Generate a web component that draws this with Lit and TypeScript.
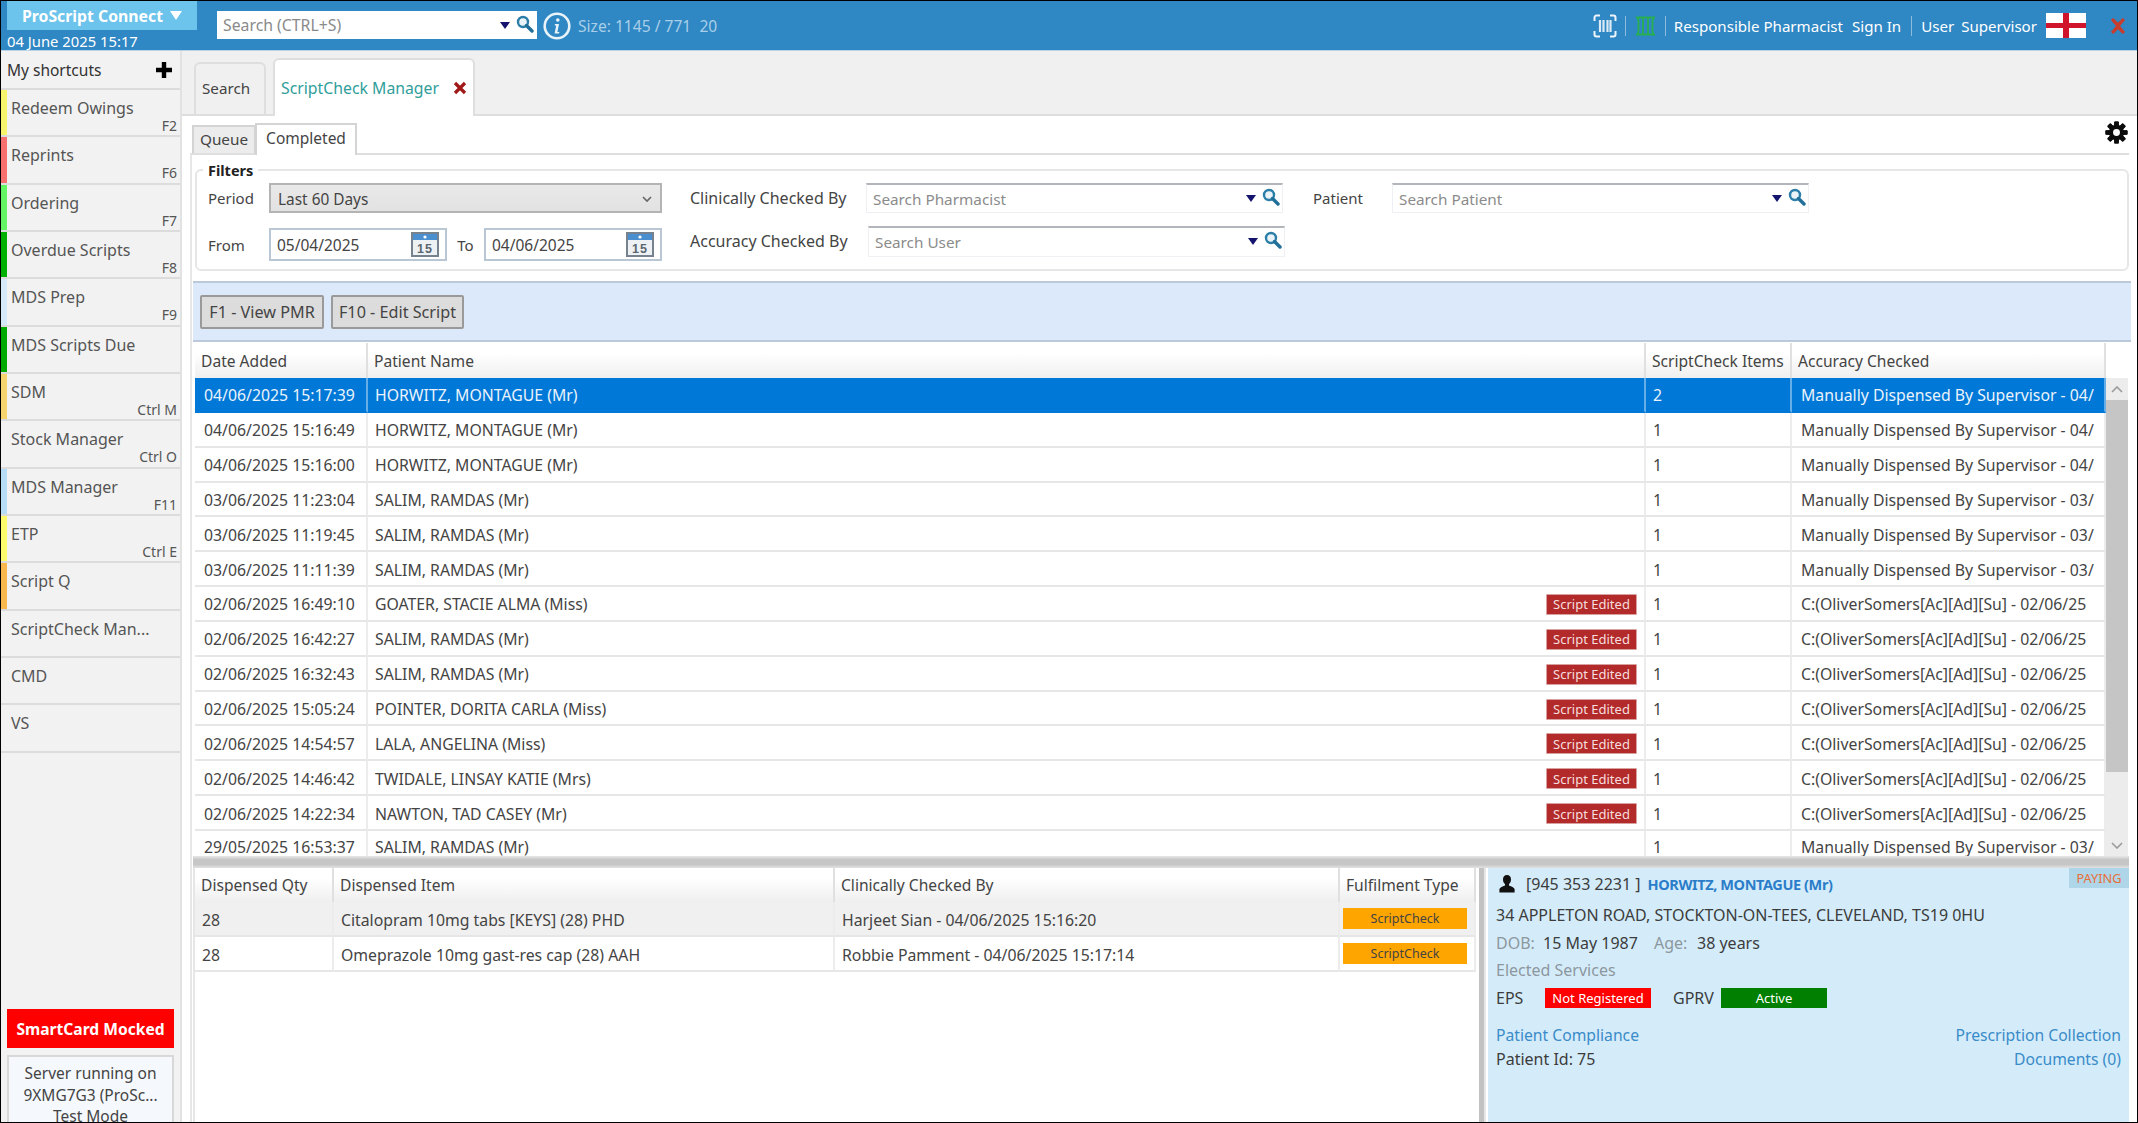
import { LitElement, html, css, svg } from "lit";
import { customElement } from "lit/decorators.js";

const shortcuts: [string, string, string][] = [
  ["Redeem Owings", "F2", "#f6f46c"],
  ["Reprints", "F6", "#f86f6f"],
  ["Ordering", "F7", "#63f563"],
  ["Overdue Scripts", "F8", "#00b000"],
  ["MDS Prep", "F9", "#d6e9f8"],
  ["MDS Scripts Due", "", "#00aa00"],
  ["SDM", "Ctrl M", "#f6d56e"],
  ["Stock Manager", "Ctrl O", "#f2f2f2"],
  ["MDS Manager", "F11", "#b6dcf6"],
  ["ETP", "Ctrl E", "#fbfb6c"],
  ["Script Q", "", "#f8b84e"],
  ["ScriptCheck Man...", "", "#f2f2f2"],
  ["CMD", "", "#f2f2f2"],
  ["VS", "", "#f2f2f2"],
];

const M = "Manually Dispensed By Supervisor - ";
const C = "C:(OliverSomers[Ac][Ad][Su] - 02/06/25";
const rows: [string, string, boolean, string, string][] = [
  ["04/06/2025 15:17:39", "HORWITZ, MONTAGUE (Mr)", false, "2", M + "04/"],
  ["04/06/2025 15:16:49", "HORWITZ, MONTAGUE (Mr)", false, "1", M + "04/"],
  ["04/06/2025 15:16:00", "HORWITZ, MONTAGUE (Mr)", false, "1", M + "04/"],
  ["03/06/2025 11:23:04", "SALIM, RAMDAS (Mr)", false, "1", M + "03/"],
  ["03/06/2025 11:19:45", "SALIM, RAMDAS (Mr)", false, "1", M + "03/"],
  ["03/06/2025 11:11:39", "SALIM, RAMDAS (Mr)", false, "1", M + "03/"],
  ["02/06/2025 16:49:10", "GOATER, STACIE ALMA (Miss)", true, "1", C],
  ["02/06/2025 16:42:27", "SALIM, RAMDAS (Mr)", true, "1", C],
  ["02/06/2025 16:32:43", "SALIM, RAMDAS (Mr)", true, "1", C],
  ["02/06/2025 15:05:24", "POINTER, DORITA CARLA (Miss)", true, "1", C],
  ["02/06/2025 14:54:57", "LALA, ANGELINA (Miss)", true, "1", C],
  ["02/06/2025 14:46:42", "TWIDALE, LINSAY KATIE (Mrs)", true, "1", C],
  ["02/06/2025 14:22:34", "NAWTON, TAD CASEY (Mr)", true, "1", C],
  ["29/05/2025 16:53:37", "SALIM, RAMDAS (Mr)", false, "1", M + "03/"],
];

const lowerRows = [
  ["28", "Citalopram 10mg tabs [KEYS] (28) PHD", "Harjeet Sian - 04/06/2025 15:16:20"],
  ["28", "Omeprazole 10mg gast-res cap (28) AAH", "Robbie Pamment - 04/06/2025 15:17:14"],
];

const mag = html`<svg class="mag" viewBox="0 0 18 18"><circle cx="7" cy="7" r="5" fill="#e9f3f8" stroke="#2b7ea8" stroke-width="2.4"/><path d="M10.5 10.5 16 16" stroke="#1f6f99" stroke-width="3.4" stroke-linecap="round"/></svg>`;
const arrow = html`<svg class="arrow" viewBox="0 0 10 7"><path d="M0 0h10L5 7z" fill="#14146e"/></svg>`;
const calendar = html`<svg class="cal" viewBox="0 0 28 25">
  <rect x="1" y="1" width="26" height="23" fill="#eef1f4" stroke="#76838f" stroke-width="2"/>
  <rect x="2" y="2" width="24" height="6" fill="#4a90d0"/>
  <circle cx="14" cy="5" r="1.6" fill="#fff"/>
  <text x="14" y="21" text-anchor="middle" font-family="'Liberation Sans',sans-serif" font-size="12.5" font-weight="700" fill="#5a6670" letter-spacing="1">15</text>
</svg>`;
const gearTeeth = Array.from({ length: 8 }, (_, i) => svg`<rect x="9.6" y="0.6" width="4.8" height="23" rx="1" fill="#0c0c0c" transform="rotate(${i * 45} 12 12)"/>`);
const gear = html`<svg class="gear" viewBox="0 0 24 24">${gearTeeth}<circle cx="12" cy="12" r="8" fill="#0c0c0c"/><circle cx="12" cy="12" r="3.6" fill="#fff"/></svg>`;

@customElement("app-root")
export class AppRoot extends LitElement {
  static styles = css`
    :host {
      display: flex;
      flex-direction: column;
      width: 100%;
      height: 100vh;
      box-sizing: border-box;
      border: 1px solid #000;
      overflow: hidden;
      font-family: "Noto Sans", "Liberation Sans", sans-serif;
      font-size: 15.8px;
      color: #444;
      background: #f0f0f0;
    }
    * { box-sizing: border-box; }
    .top {
      flex: none;
      height: 50px;
      background: #2f87c3;
      border-bottom: 1px solid #b9d3e6;
      display: flex;
      align-items: center;
      color: #fff;
    }
    .brand { flex: none; width: 216px; height: 49px; padding-left: 6px; display: flex; flex-direction: column; }
    .brand-name {
      flex: none; width: 190px; height: 29px; background: #6cc3eb; color: #fff; font-weight: 700; font-size: 15.8px;
      display: flex; align-items: center; justify-content: center; gap: 7px;
    }
    .brand-name svg { width: 12px; height: 9px; }
    .brand-date { flex: none; font-size: 14.8px; height: 20px; line-height: 22px; white-space: nowrap; }
    .top-search {
      width: 320px; height: 28px; background: #fff; display: flex; align-items: center; padding: 0 3px 0 6px;
      color: #8a8a8a; font-size: 15.8px; margin-top: -1px;
    }
    .grow { flex: 1; }
    .arrow { width: 10px; height: 7px; flex: none; }
    .mag { width: 18px; height: 18px; flex: none; margin-left: 6px; margin-bottom: 3px; }
    .info { width: 28px; height: 28px; margin-left: 6px; flex: none; }
    .size { margin-left: 7px; color: #a9cfe9; font-size: 15.6px; white-space: pre; }
    .top-right { margin-left: auto; display: flex; align-items: center; font-size: 15.1px; white-space: nowrap; }
    .sep { width: 1px; height: 20px; background: #8fbcdc; margin: 0 8px; }
    .sep.w { margin: 0 9.500px; }
    .i-bar { width: 24px; height: 24px; }
    .i-green { width: 23px; height: 20px; }
    .sp { margin-left: 9px; }
    .sp2 { margin-left: 7px; }
    .flag { width: 40px; height: 25px; margin-left: 9px; }
    .close { width: 16px; height: 16px; margin-left: 24px; margin-right: 11px; }

    .body { flex: 1; min-height: 0; display: flex; }
    .side {
      flex: none; width: 181px; background: #f2f2f2; border-right: 2px solid #e2e2e2;
      display: flex; flex-direction: column; padding-bottom: 0;
    }
    .side-head {
      height: 39px; padding: 0 7px 0 6px; display: flex; align-items: center; justify-content: space-between;
      border-bottom: 2px solid #dcdcdc; color: #333; font-size: 15.5px;
    }
    .plus { width: 18px; height: 18px; }
    .item {
      height: 47.35px; flex: none; border-bottom: 2px solid #dcdcdc; display: flex; color: #555;
    }
    .strip { width: 6px; flex: none; }
    .item-in { flex: 1; padding: 5px 3px 0 4px; display: flex; flex-direction: column; min-width: 0; }
    .item-name { line-height: 26px; font-size: 16px; white-space: nowrap; }
    .item-key { text-align: right; font-size: 14px; line-height: 20px; margin-top: -5px; }
    .smart {
      margin: auto 6px 0; height: 39px; background: #f00; color: #fff; font-weight: 700; font-size: 15.6px;
      display: flex; align-items: center; justify-content: center; flex: none; white-space: nowrap;
    }
    .server {
      margin: 7px 6px 0; flex: none; height: 67px; background: #f5f9fd; border: 2px solid #d8d8d8; border-bottom: 0;
      text-align: center; font-size: 15.5px; color: #444; padding-top: 5px; white-space: nowrap;
    }
    .server div { height: 22px; line-height: 22px; }
    .server .last { height: 15px; line-height: 15px; margin-top: 3px; }

    .main { flex: 1; min-width: 0; display: flex; flex-direction: column; }
    .tabs { flex: none; height: 63px; display: flex; align-items: flex-end; padding-left: 12px; gap: 7px; }
    .tab {
      border: 2px solid #dedede; border-bottom: 0; border-radius: 6px 6px 0 0; display: flex; align-items: center;
      padding-left: 6px; padding-bottom: 2px;
    }
    .tab-a { width: 72px; height: 52px; color: #444; font-size: 15.2px; }
    .tab-b { width: 202px; height: 58px; background: #fff; color: #2f9e9a; position: relative; top: 2px; z-index: 1; margin-top: -2px; font-size: 15.8px; padding-bottom: 1px; }
    .tab-x { width: 14px; height: 14px; margin-left: 14px; }
    .content { flex: 1; min-height: 0; background: #fff; border-top: 2px solid #dedede; display: flex; flex-direction: column; }
    .subtabs { flex: none; height: 37px; display: flex; align-items: flex-end; padding-left: 10px; padding-right: 9px; }
    .st { display: flex; align-items: center; justify-content: center; border: 2px solid #d4d4d4; border-bottom: 0; font-size: 15.3px; padding-bottom: 3px; }
    .st-a { width: 64px; height: 28px; background: #ececec; color: #444; }
    .st-b { width: 102px; height: 32px; background: #fff; color: #444; position: relative; top: 2px; margin-top: -2px; margin-left: -1px; font-size: 15.5px; padding-bottom: 5px; }
    .gear { width: 23px; height: 23px; margin-left: auto; align-self: center; margin-bottom: 5px; }
    .panel { flex: 1; min-height: 0; margin-left: 8px; margin-right: 8px; border-top: 2px solid #dedede; border-left: 2px solid #e6e6e6; display: flex; flex-direction: column; }
    .filters {
      flex: none; margin: 14px 0 0 3px; height: 102px; border: 2px solid #e6e6e6; border-radius: 6px; position: relative;
      padding: 12px 0 0 11px;
      display: grid; grid-template-columns: 61px 393px 28px 176px 417px 30px 79px 417px; grid-template-rows: 30px 33px; row-gap: 13px; align-items: center;
    }
    .legend { position: absolute; left: 6px; top: -11px; padding: 0 5px; background: #fff; font-weight: 700; font-size: 14.5px; color: #222; line-height: 20px; }
    .lbl { font-size: 16px; color: #444; white-space: nowrap; }
    .lbl.s { font-size: 15px; }
    .select {
      height: 30px; background: linear-gradient(#e9e9e9, #e2e2e2); border: 2px solid #b4b4b4; display: flex; align-items: center;
      justify-content: space-between; padding: 2px 8px 0 7px; color: #444; font-size: 15.4px;
    }
    .select svg { width: 10px; height: 7px; }
    .down { margin-top: 4px; }
    .up { margin-bottom: 4px; }
    .dates { display: flex; align-items: center; }
    .to { flex: 1; text-align: center; font-size: 15px; }
    .date {
      width: 178px; height: 33px; border: 2px solid #b9c6d4; display: flex; align-items: center; justify-content: space-between;
      padding: 0 6px 0 6px; color: #444; font-size: 15.5px; background: #fff;
    }
    .cal { width: 28px; height: 25px; flex: none; }
    .sbox {
      height: 30px; border: 1px solid #eef0f3; border-top: 2px solid #b2b6bb; display: flex; align-items: center; padding: 0 2px 0 6px;
      color: #8b8b8b; font-size: 15.3px; background: #fff;
    }
    .sbox.user { height: 31px; margin-left: 2px; margin-right: -2px; margin-bottom: 3px; }
    .toolbar {
      flex: none; margin: 10px -2px 1px 1px; height: 61px; background: #dce9fb; border-top: 2px solid #bcc9da; border-bottom: 2px solid #bcc9da;
      display: flex; align-items: center; padding-left: 7px; gap: 7px;
    }
    .btn {
      height: 34px; background: #dcdcdc; border: 2px solid #9a9a9a; border-radius: 2px; display: flex; align-items: center; justify-content: center;
      font-size: 16.2px; color: #444; white-space: nowrap;
    }
    .b1 { width: 124px; } .b2 { width: 133px; }

    .uhead, .urow { display: grid; grid-template-columns: 173px 1278px 146px 314px; }
    .upper { flex: none; height: 513px; margin-left: 3px; display: grid; grid-template-columns: 1911px 22px; grid-template-rows: 35px 478px; }
    .hcell {
      height: 35px; background: linear-gradient(#fff 30%, #efefef); border-right: 2px solid #e0e0e0; display: flex; align-items: center;
      padding-left: 6px; font-size: 15.6px; color: #444; white-space: nowrap;
    }
    .hcorner { background: #fff; }
    .ubody { overflow: hidden; }
    .urow { height: 34.85px; }
    .urow.cutrow { height: 25px; }
    .cell {
      display: flex; align-items: center; padding: 2px 0 0 7px; border-right: 2px solid #ececec; border-bottom: 2px solid #e6e6e6;
      font-size: 15.8px; color: #444; white-space: nowrap; overflow: hidden; min-width: 0;
    }
    .cell.date-c { padding-left: 9px; }
    .cell.acc-c { padding-left: 9px; }
    .cutrow .cell { align-items: flex-start; padding-top: 7px; line-height: 18px; border-bottom: 0; }
    .sel .cell { background: #0078d7; color: #eaf3fb; border-right-color: #66aee7; border-bottom-color: #0078d7; }
    .pname { justify-content: space-between; }
    .edited {
      width: 91px; height: 21px; background: #b22a2a; color: #f6dede; font-size: 13px; border: 1px solid #d9a0a0; border-radius: 1px;
      display: flex; align-items: center; justify-content: center; margin-right: 7px; flex: none;
    }
    .sbar { background: #ececec; display: flex; flex-direction: column; align-items: center; justify-content: space-between; }
    .sb-btn { height: 22px; width: 22px; background: #ececec; display: flex; align-items: center; justify-content: center; flex: none; }
    .sb-btn svg { width: 12px; height: 7px; }
    .thumb { width: 22px; height: 372px; background: #c5c5c5; flex: none; }
    .sb-space { flex: 1; }
    .hsplit { flex: none; height: 12px; margin-left: 1px; background: linear-gradient(#e8e8e8, #c6c6c6 30%, #c6c6c6 70%, #e2e2e2); }

    .lower { flex: 1; min-height: 0; display: flex; margin-left: 1px; }
    .ltable { width: 1283px; flex: none; border-left: 2px solid #e6e6e6; }
    .lhead, .lrow { display: grid; grid-template-columns: 139px 501px 505px 136px; }
    .lhead .hcell { height: 34px; }
    .lrow { height: 35px; }
    .lrow.alt .cell { background: #f0f0f0; }
    .badge { width: 124px; height: 21px; background: #ffa500; color: #444; font-size: 12.5px; display: flex; align-items: center; justify-content: center; }
    .lrow .fcell { padding: 0 0 0 3px; }
    .vsplit { width: 10px; flex: none; background: linear-gradient(90deg, #fff 0 30%, #c2c2c2 30% 75%, #e6e6e6 75%); margin-right: 2px; }
    .info-p {
      flex: 1; background: #d4ecfa; position: relative; padding: 2px 8px 0 8px; font-size: 16px; color: #3c3c3c; line-height: 24px; min-width: 0;
    }
    .paying { position: absolute; right: 0; top: 0; width: 60px; height: 20px; background: #aed5e8; color: #e8703a; font-size: 12.8px; line-height: 20px; text-align: center; }
    .p1 { display: flex; align-items: center; height: 27px; padding-left: 3px; }
    .person { width: 16px; height: 18px; margin-right: 11px; }
    .pname2 { color: #2b7dc9; font-weight: 700; margin-left: 7px; font-size: 14.5px; letter-spacing: -0.4px; }
    .addr { margin-top: 5px; height: 27px; line-height: 27px; }
    .p3 { height: 28px; line-height: 28px; display: flex; }
    .dob { width: 47px; }
    .dobv { width: 111px; }
    .agel { width: 43px; }
    .grey { color: #8d979e; }
    .p5 { height: 26px; line-height: 26px; }
    .p6 { height: 28px; margin-top: 1px; display: flex; align-items: center; }
    .tag { width: 106px; height: 20px; color: #fff; font-size: 13px; display: flex; align-items: center; justify-content: center; }
    .eps { width: 49px; }
    .gprv { margin-left: 22px; width: 48px; }
    .red { background: #f00; } .green { background: #007f00; }
    .links { display: flex; justify-content: space-between; margin-top: 11px; height: 24px; line-height: 24px; }
    .link { color: #3a8bc8; font-size: 15.7px; }
    .links.b { margin-top: 0; color: #3c3c3c; }
  `;

  private searchBox(ph: string, cls = "sbox") {
    return html`<div class=${cls}><span class="grow">${ph}</span>${arrow}${mag}</div>`;
  }

  render() {
    return html`
      <div class="top">
        <div class="brand">
          <div class="brand-name">ProScript Connect<svg viewBox="0 0 12 9"><path d="M0 0h12L6 9z" fill="#fff"/></svg></div>
          <div class="brand-date">04 June 2025 15:17</div>
        </div>
        ${this.searchBox("Search (CTRL+S)", "top-search")}
        <svg class="info" viewBox="0 0 28 28"><circle cx="14" cy="14" r="12.3" fill="#2f87c3" stroke="#e8f3fa" stroke-width="2.6"/><circle cx="14.8" cy="8" r="1.8" fill="#e8f3fa"/><path d="M12 12h4l-1.6 8h2l-.4 1.6h-4.4l1.6-8h-1.6z" fill="#e8f3fa"/></svg>
        <div class="size">Size: 1145 / 771  20</div>
        <div class="top-right">
          <svg class="i-bar" viewBox="0 0 24 24" fill="none" stroke="#eef6fb"><path d="M1.500 7V3.500a2 2 0 0 1 2-2H7M17 1.500h3.500a2 2 0 0 1 2 2V7M22.500 17v3.500a2 2 0 0 1-2 2H17M7 22.500H3.500a2 2 0 0 1-2-2V17" stroke-width="2"/><path d="M7 6v12M10.500 6v12M14.500 6v12M17.500 6v12" stroke-width="2.200" stroke="#dcebf6"/></svg>
          <span class="sep"></span>
          <svg class="i-green" viewBox="0 0 23 20" fill="none" stroke="#28b050" stroke-width="1.800"><path d="M3 1.500h17l-1.500 3v11l1.500 3H3l1.500-3v-11z"/><path d="M9 1.500v17M14 1.500v17"/></svg>
          <span class="sep"></span>
          <span>Responsible Pharmacist</span><span class="sp">Sign In</span>
          <span class="sep w"></span>
          <span>User</span><span class="sp2">Supervisor</span>
          <svg class="flag" viewBox="0 0 40 25"><rect width="40" height="25" fill="#fff"/><rect x="17" width="6" height="25" fill="#d0142c"/><rect y="10" width="40" height="5" fill="#d0142c"/></svg>
          <svg class="close" viewBox="0 0 16 16"><path d="M2 1l6 6 6-6M2 15l6-6 6 6M3 2l10 12M13 2L3 14" stroke="#c63d2f" stroke-width="3.2" fill="none"/></svg>
        </div>
      </div>
      <div class="body">
        <div class="side">
          <div class="side-head"><span>My shortcuts</span><svg class="plus" viewBox="0 0 18 18"><path d="M9 1v16M1 9h16" stroke="#000" stroke-width="4.4"/></svg></div>
          ${shortcuts.map(([n, k, c]) => html`<div class="item">
            <div class="strip" style="background:${c}"></div>
            <div class="item-in"><div class="item-name">${n}</div><div class="item-key">${k}</div></div>
          </div>`)}
          <div class="smart">SmartCard Mocked</div>
          <div class="server"><div>Server running on</div><div>9XMG7G3 (ProSc...</div><div class="last">Test Mode</div></div>
        </div>
        <div class="main">
          <div class="tabs">
            <div class="tab tab-a">Search</div>
            <div class="tab tab-b">ScriptCheck Manager<svg class="tab-x" viewBox="0 0 14 14"><path d="M2 2l10 10M12 2L2 12" stroke="#a01818" stroke-width="3.2"/></svg></div>
          </div>
          <div class="content">
            <div class="subtabs">
              <div class="st st-a">Queue</div>
              <div class="st st-b">Completed</div>
              ${gear}
            </div>
            <div class="panel">
              <div class="filters">
                <div class="legend">Filters</div>
                <div class="lbl s">Period</div>
                <div class="select"><span>Last 60 Days</span><svg viewBox="0 0 10 7"><path d="M1 1l4 4 4-4" fill="none" stroke="#666" stroke-width="1.6"/></svg></div>
                <div></div>
                <div class="lbl">Clinically Checked By</div>
                ${this.searchBox("Search Pharmacist")}
                <div></div>
                <div class="lbl s">Patient</div>
                ${this.searchBox("Search Patient")}
                <div class="lbl s down">From</div>
                <div class="dates down">
                  <div class="date">05/04/2025${calendar}</div>
                  <div class="to">To</div>
                  <div class="date">04/06/2025${calendar}</div>
                </div>
                <div></div>
                <div class="lbl up">Accuracy Checked By</div>
                ${this.searchBox("Search User", "sbox user")}
              </div>
              <div class="toolbar">
                <div class="btn b1">F1 - View PMR</div>
                <div class="btn b2">F10 - Edit Script</div>
              </div>
              <div class="upper">
                <div class="uhead">
                  <div class="hcell">Date Added</div>
                  <div class="hcell">Patient Name</div>
                  <div class="hcell">ScriptCheck Items</div>
                  <div class="hcell">Accuracy Checked</div>
                </div>
                <div class="hcorner"></div>
                <div class="ubody">
                  ${rows.map((r, i) => html`<div class="urow ${i === 0 ? "sel" : ""} ${i === rows.length - 1 ? "cutrow" : ""}">
                    <div class="cell date-c">${r[0]}</div>
                    <div class="cell pname"><span>${r[1]}</span>${r[2] ? html`<span class="edited">Script Edited</span>` : ""}</div>
                    <div class="cell">${r[3]}</div>
                    <div class="cell acc-c">${r[4]}</div>
                  </div>`)}
                </div>
                <div class="sbar">
                  <div class="sb-btn"><svg viewBox="0 0 12 7"><path d="M1 6l5-5 5 5" fill="none" stroke="#9a9a9a" stroke-width="1.6"/></svg></div>
                  <div class="thumb"></div>
                  <div class="sb-space"></div>
                  <div class="sb-btn"><svg viewBox="0 0 12 7"><path d="M1 1l5 5 5-5" fill="none" stroke="#9a9a9a" stroke-width="1.6"/></svg></div>
                </div>
              </div>
              <div class="hsplit"></div>
              <div class="lower">
                <div class="ltable">
                  <div class="lhead">
                    <div class="hcell">Dispensed Qty</div>
                    <div class="hcell">Dispensed Item</div>
                    <div class="hcell">Clinically Checked By</div>
                    <div class="hcell">Fulfilment Type</div>
                  </div>
                  ${lowerRows.map((r, i) => html`<div class="lrow ${i === 0 ? "alt" : ""}">
                    <div class="cell">${r[0]}</div>
                    <div class="cell">${r[1]}</div>
                    <div class="cell">${r[2]}</div>
                    <div class="cell fcell"><span class="badge">ScriptCheck</span></div>
                  </div>`)}
                </div>
                <div class="vsplit"></div>
                <div class="info-p">
                  <div class="paying">PAYING</div>
                  <div class="p1">
                    <svg class="person" viewBox="0 0 16 18"><path d="M8 0c2.500 0 4 1.800 4 4.400 0 2-.8 3.600-2 4.600v1.400c2.600.8 5 1.800 5.600 3.600v3.600H.4V14c.6-1.800 3-2.800 5.600-3.600V9C4.800 8 4 6.400 4 4.400 4 1.800 5.500 0 8 0z" fill="#111"/></svg>
                    <span>[945 353 2231 ]</span><span class="pname2">HORWITZ, MONTAGUE (Mr)</span>
                  </div>
                  <div class="addr">34 APPLETON ROAD, STOCKTON-ON-TEES, CLEVELAND, TS19 0HU</div>
                  <div class="p3"><span class="grey dob">DOB:</span><span class="dobv">15 May 1987</span><span class="grey agel">Age:</span><span>38 years</span></div>
                  <div class="p5 grey">Elected Services</div>
                  <div class="p6"><span class="eps">EPS</span><span class="tag red">Not Registered</span><span class="gprv">GPRV</span><span class="tag green">Active</span></div>
                  <div class="links"><span class="link">Patient Compliance</span><span class="link">Prescription Collection</span></div>
                  <div class="links b"><span>Patient Id: 75</span><span class="link">Documents (0)</span></div>
                </div>
              </div>
            </div>
          </div>
        </div>
      </div>
    `;
  }
}
